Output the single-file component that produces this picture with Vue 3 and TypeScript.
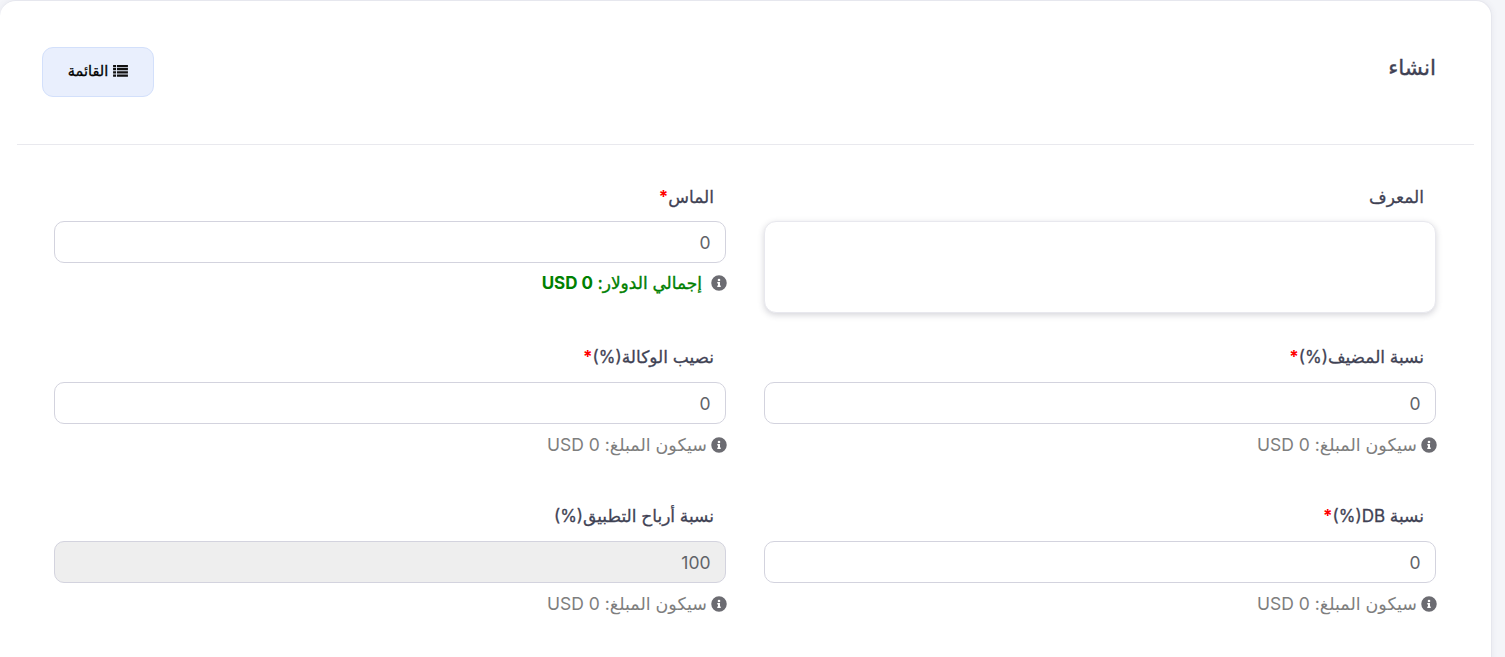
<script setup lang="ts">
interface Field { label: string; required: boolean; value: string; disabled?: boolean }
const rows: Field[][] = [
  [{ label: 'نسبة المضيف(%)', required: true, value: '0' }, { label: 'نصيب الوكالة(%)', required: true, value: '0' }],
  [{ label: 'نسبة DB(%)', required: true, value: '0' }, { label: 'نسبة أرباح التطبيق(%)', required: false, value: '100', disabled: true }],
]
const fields = rows.flat()
</script>

<template>
  <div class="page" dir="rtl">
    <section class="card">
      <header class="head">
        <h1 class="title">انشاء</h1>
        <button class="list-btn" type="button">
          <svg class="list-icon" viewBox="0 0 16 14" aria-hidden="true">
            <path d="M0 1h3.2v2.4H0zM4.2 1H16v2.4H4.2zM0 4.4h3.2v2.4H0zM4.2 4.4H16v2.4H4.2zM0 7.8h3.2v2.4H0zM4.2 7.8H16v2.4H4.2zM0 11.2h3.2v2.4H0zM4.2 11.2H16v2.4H4.2z" />
          </svg>
          <span>القائمة</span>
        </button>
      </header>
      <div class="body">
        <div class="field first">
          <label class="label">المعرف</label>
          <div class="area"></div>
        </div>
        <div class="field first">
          <label class="label">الماس<span class="req">*</span></label>
          <input class="control" value="0" />
          <p class="hint total">
            <svg class="info" viewBox="0 0 512 512" aria-hidden="true"><path d="M256 8a248 248 0 1 0 0 496 248 248 0 0 0 0-496zm0 110a42 42 0 1 1 0 84 42 42 0 0 1 0-84zm56 254c0 7-5 12-12 12h-88c-7 0-12-5-12-12v-24c0-7 5-12 12-12h12v-64h-12c-7 0-12-5-12-12v-24c0-7 5-12 12-12h64c7 0 12 5 12 12v100h12c7 0 12 5 12 12z"/></svg>
            <span class="total-text">إجمالي الدولار: <b class="total-num">0 USD</b></span>
          </p>
        </div>
        <div v-for="f in fields" :key="f.label" class="field">
          <label class="label">{{ f.label }}<span v-if="f.required" class="req">*</span></label>
          <input class="control" :class="{ off: f.disabled }" :value="f.value" :disabled="f.disabled" />
          <p class="hint">
            <svg class="info" viewBox="0 0 512 512" aria-hidden="true"><path d="M256 8a248 248 0 1 0 0 496 248 248 0 0 0 0-496zm0 110a42 42 0 1 1 0 84 42 42 0 0 1 0-84zm56 254c0 7-5 12-12 12h-88c-7 0-12-5-12-12v-24c0-7 5-12 12-12h12v-64h-12c-7 0-12-5-12-12v-24c0-7 5-12 12-12h64c7 0 12 5 12 12v100h12c7 0 12 5 12 12z"/></svg>
            <span>سيكون المبلغ: 0 USD</span>
          </p>
        </div>
      </div>
    </section>
  </div>
</template>

<style>
html, body { margin: 0; background: #f4f5f9; overflow: hidden; }
</style>

<style scoped>
.page {
  width: 1505px;
  height: 657px;
  box-sizing: border-box;
  padding-right: 13px;
  font-family: Inter, "Noto Sans", "DejaVu Sans", sans-serif;
  overflow: hidden;
}
.card {
  box-sizing: border-box;
  width: 1492px;
  height: 700px;
  background: #fff;
  border: 1px solid #e6e7ee;
  border-left: 0;
  border-radius: 16px 16px 0 0;
  padding: 0 17px;
  box-shadow: 0 0 6px rgba(80, 80, 120, 0.08);
}
.head {
  box-sizing: border-box;
  height: 144px;
  border-bottom: 1px solid #e9e9ee;
  display: flex;
  justify-content: space-between;
  align-items: flex-start;
  padding: 46px 38px 0 25px;
}
.title {
  margin: 4px 0 0;
  font-size: 21.5px;
  font-weight: 400;
  -webkit-text-stroke: 0.35px #3f4254;
  line-height: 32px;
  color: #3f4254;
}
.list-btn {
  width: 112px;
  height: 50px;
  box-sizing: border-box;
  display: flex;
  align-items: center;
  justify-content: center;
  gap: 5px;
  background: #e9effd;
  border: 1px solid #d3e0fb;
  border-radius: 11px;
  color: #000;
  font: 400 14.5px Inter, "Noto Sans", "DejaVu Sans", sans-serif;
  -webkit-text-stroke: 0.3px #000;
  padding: 0 0 3px;
}
.list-icon { width: 15px; height: 13px; fill: #111; }
.body {
  display: grid;
  grid-template-columns: 672px 672px;
  column-gap: 38px;
  padding: 0 38px 0 37px;
}
.field { height: 159px; padding-top: 39px; box-sizing: border-box; }
.field.first { height: 161px; padding-top: 40px; }
.label {
  display: block;
  height: 24px;
  padding-right: 12px;
  margin-bottom: 13px;
  font-size: 17px;
  font-weight: 400;
  -webkit-text-stroke: 0.3px #3f4254;
  line-height: 24px;
  color: #3f4254;
}
.first .label { margin-bottom: 12px; }
.req { color: #f00; font-weight: 700; -webkit-text-stroke: 0; }
.control {
  display: block;
  width: 100%;
  height: 42px;
  box-sizing: border-box;
  border: 1px solid #d3d3de;
  border-radius: 10px;
  padding: 0 14.5px;
  background: #fff;
  color: #5f6368;
  font: 400 17.5px Inter, "Noto Sans", "DejaVu Sans", sans-serif;
  text-align: right;
  direction: rtl;
  outline: none;
}
.control.off { background: #eee; color: #5f6368; }
.area {
  height: 91.5px;
  box-sizing: border-box;
  border: 1px solid #e8e8ee;
  border-radius: 12px;
  box-shadow: 0 2px 6px rgba(60, 60, 80, 0.22);
  background: #fff;
}
.hint {
  margin: 11px 0 0;
  display: flex;
  align-items: center;
  gap: 4px;
  font-size: 17.5px;
  line-height: 20px;
  color: #7e7e7e;
}
.info { width: 16px; height: 16px; fill: #6c6c72; flex: none; margin-right: -1px; }
.total { gap: 9px; margin-top: 10px; }
.total-text { color: #008000; font-size: 17px; -webkit-text-stroke: 0.35px #008000; }
.total-num { font-size: 17px; font-weight: 700; -webkit-text-stroke: 0; }
</style>
